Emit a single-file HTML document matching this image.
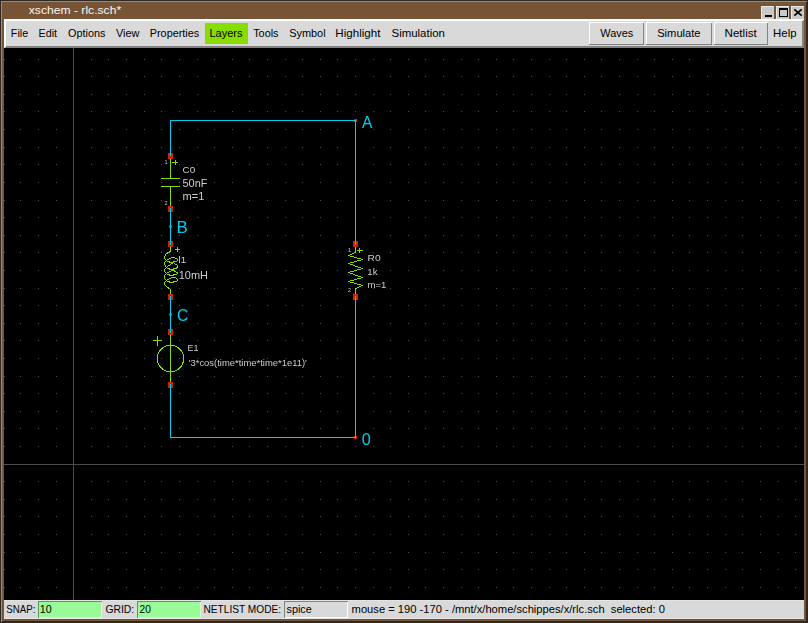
<!DOCTYPE html>
<html><head><meta charset="utf-8"><style>
html,body{margin:0;padding:0;background:#000;overflow:hidden}
svg{display:block}
text{font-family:"Liberation Sans",sans-serif;white-space:pre}
</style></head><body>
<svg width="808" height="623" viewBox="0 0 808 623" shape-rendering="crispEdges" xml:space="preserve">
<defs><filter id="gf"><feOffset dx="0" dy="0"/></filter></defs>
<rect x="0" y="0" width="808" height="623" fill="#775435"/>
<rect x="0" y="0" width="808" height="1" fill="#2c2823"/>
<rect x="0" y="0" width="1" height="623" fill="#2c2823"/>
<rect x="806" y="0" width="2" height="623" fill="#2c2823"/>
<rect x="0" y="621" width="808" height="2" fill="#2c2823"/>
<rect x="1" y="1" width="806" height="1" fill="#c4823c"/>
<rect x="1" y="1" width="1" height="621" fill="#c4823c"/>
<rect x="761" y="6" width="13" height="13" fill="#e8e8e8"/>
<rect x="762" y="7" width="12" height="12" fill="#c9c9c9"/>
<rect x="765" y="15" width="7" height="2" fill="#000"/>
<rect x="776" y="6" width="13" height="13" fill="#e8e8e8"/>
<rect x="777" y="7" width="12" height="12" fill="#c9c9c9"/>
<rect x="779.5" y="8.5" width="8" height="8" fill="none" stroke="#000" stroke-width="1"/>
<rect x="779" y="8" width="9" height="2" fill="#000"/>
<rect x="791" y="6" width="13" height="13" fill="#e8e8e8"/>
<rect x="792" y="7" width="12" height="12" fill="#c9c9c9"/>
<path d="M794.3 9.3 L801.7 15.7 M801.7 9.3 L794.3 15.7" stroke="#000" stroke-width="1.7" shape-rendering="auto"/>
<rect x="4" y="19" width="800" height="29" fill="#828282"/>
<rect x="4" y="19" width="800" height="2" fill="#ffffff"/>
<rect x="4" y="19" width="2" height="29" fill="#ffffff"/>
<path d="M802 21h1v-1h1v28h-2z" fill="#828282"/>
<rect x="6" y="46" width="798" height="2" fill="#828282"/>
<path d="M4 48h1v-1h1v1z" fill="#828282"/>
<rect x="6" y="21" width="796" height="25" fill="#d9d9d9"/>
<rect x="205" y="23" width="43" height="21" fill="#88dd00"/>
<rect x="589" y="22" width="55" height="23" fill="#828282"/>
<rect x="589" y="22" width="55" height="1" fill="#ffffff"/>
<rect x="589" y="22" width="1" height="22" fill="#ffffff"/>
<rect x="590" y="23" width="53" height="21" fill="#d9d9d9"/>
<rect x="646" y="22" width="66" height="23" fill="#828282"/>
<rect x="646" y="22" width="66" height="1" fill="#ffffff"/>
<rect x="646" y="22" width="1" height="22" fill="#ffffff"/>
<rect x="647" y="23" width="64" height="21" fill="#d9d9d9"/>
<rect x="714" y="22" width="54" height="23" fill="#828282"/>
<rect x="714" y="22" width="54" height="1" fill="#ffffff"/>
<rect x="714" y="22" width="1" height="22" fill="#ffffff"/>
<rect x="715" y="23" width="52" height="21" fill="#d9d9d9"/>
<rect x="4" y="48" width="800" height="552" fill="#000"/>
<rect x="4" y="600" width="800" height="19" fill="#d9d9d9"/>
<rect x="4" y="600" width="800" height="1" fill="#e4e4e4"/>
<rect x="4" y="618" width="800" height="1" fill="#e4e4e4"/>
<rect x="38" y="601" width="64" height="17" fill="#d5ffd5"/>
<rect x="38" y="601" width="64" height="1" fill="#5b975b"/>
<rect x="38" y="601" width="1" height="17" fill="#5b975b"/>
<rect x="39" y="602" width="62" height="15" fill="#98fb98"/>
<rect x="137" y="601" width="64" height="17" fill="#d5ffd5"/>
<rect x="137" y="601" width="64" height="1" fill="#5b975b"/>
<rect x="137" y="601" width="1" height="17" fill="#5b975b"/>
<rect x="138" y="602" width="62" height="15" fill="#98fb98"/>
<rect x="284" y="601" width="64" height="17" fill="#ffffff"/>
<rect x="284" y="601" width="64" height="1" fill="#828282"/>
<rect x="284" y="601" width="1" height="17" fill="#828282"/>
<rect x="285" y="602" width="62" height="15" fill="#d9d9d9"/>
<path d="M4 59h1v1h-1zM4 76h1v1h-1zM4 94h1v1h-1zM4 111h1v1h-1zM4 129h1v1h-1zM4 147h1v1h-1zM4 164h1v1h-1zM4 182h1v1h-1zM4 200h1v1h-1zM4 217h1v1h-1zM4 235h1v1h-1zM4 252h1v1h-1zM4 270h1v1h-1zM4 288h1v1h-1zM4 305h1v1h-1zM4 323h1v1h-1zM4 340h1v1h-1zM4 358h1v1h-1zM4 376h1v1h-1zM4 393h1v1h-1zM4 411h1v1h-1zM4 428h1v1h-1zM4 446h1v1h-1zM4 481h1v1h-1zM4 499h1v1h-1zM4 516h1v1h-1zM4 534h1v1h-1zM4 552h1v1h-1zM4 569h1v1h-1zM4 587h1v1h-1zM20 59h1v1h-1zM20 76h1v1h-1zM20 94h1v1h-1zM20 111h1v1h-1zM20 129h1v1h-1zM20 147h1v1h-1zM20 164h1v1h-1zM20 182h1v1h-1zM20 200h1v1h-1zM20 217h1v1h-1zM20 235h1v1h-1zM20 252h1v1h-1zM20 270h1v1h-1zM20 288h1v1h-1zM20 305h1v1h-1zM20 323h1v1h-1zM20 340h1v1h-1zM20 358h1v1h-1zM20 376h1v1h-1zM20 393h1v1h-1zM20 411h1v1h-1zM20 428h1v1h-1zM20 446h1v1h-1zM20 481h1v1h-1zM20 499h1v1h-1zM20 516h1v1h-1zM20 534h1v1h-1zM20 552h1v1h-1zM20 569h1v1h-1zM20 587h1v1h-1zM38 59h1v1h-1zM38 76h1v1h-1zM38 94h1v1h-1zM38 111h1v1h-1zM38 129h1v1h-1zM38 147h1v1h-1zM38 164h1v1h-1zM38 182h1v1h-1zM38 200h1v1h-1zM38 217h1v1h-1zM38 235h1v1h-1zM38 252h1v1h-1zM38 270h1v1h-1zM38 288h1v1h-1zM38 305h1v1h-1zM38 323h1v1h-1zM38 340h1v1h-1zM38 358h1v1h-1zM38 376h1v1h-1zM38 393h1v1h-1zM38 411h1v1h-1zM38 428h1v1h-1zM38 446h1v1h-1zM38 481h1v1h-1zM38 499h1v1h-1zM38 516h1v1h-1zM38 534h1v1h-1zM38 552h1v1h-1zM38 569h1v1h-1zM38 587h1v1h-1zM56 59h1v1h-1zM56 76h1v1h-1zM56 94h1v1h-1zM56 111h1v1h-1zM56 129h1v1h-1zM56 147h1v1h-1zM56 164h1v1h-1zM56 182h1v1h-1zM56 200h1v1h-1zM56 217h1v1h-1zM56 235h1v1h-1zM56 252h1v1h-1zM56 270h1v1h-1zM56 288h1v1h-1zM56 305h1v1h-1zM56 323h1v1h-1zM56 340h1v1h-1zM56 358h1v1h-1zM56 376h1v1h-1zM56 393h1v1h-1zM56 411h1v1h-1zM56 428h1v1h-1zM56 446h1v1h-1zM56 481h1v1h-1zM56 499h1v1h-1zM56 516h1v1h-1zM56 534h1v1h-1zM56 552h1v1h-1zM56 569h1v1h-1zM56 587h1v1h-1zM91 59h1v1h-1zM91 76h1v1h-1zM91 94h1v1h-1zM91 111h1v1h-1zM91 129h1v1h-1zM91 147h1v1h-1zM91 164h1v1h-1zM91 182h1v1h-1zM91 200h1v1h-1zM91 217h1v1h-1zM91 235h1v1h-1zM91 252h1v1h-1zM91 270h1v1h-1zM91 288h1v1h-1zM91 305h1v1h-1zM91 323h1v1h-1zM91 340h1v1h-1zM91 358h1v1h-1zM91 376h1v1h-1zM91 393h1v1h-1zM91 411h1v1h-1zM91 428h1v1h-1zM91 446h1v1h-1zM91 481h1v1h-1zM91 499h1v1h-1zM91 516h1v1h-1zM91 534h1v1h-1zM91 552h1v1h-1zM91 569h1v1h-1zM91 587h1v1h-1zM108 59h1v1h-1zM108 76h1v1h-1zM108 94h1v1h-1zM108 111h1v1h-1zM108 129h1v1h-1zM108 147h1v1h-1zM108 164h1v1h-1zM108 182h1v1h-1zM108 200h1v1h-1zM108 217h1v1h-1zM108 235h1v1h-1zM108 252h1v1h-1zM108 270h1v1h-1zM108 288h1v1h-1zM108 305h1v1h-1zM108 323h1v1h-1zM108 340h1v1h-1zM108 358h1v1h-1zM108 376h1v1h-1zM108 393h1v1h-1zM108 411h1v1h-1zM108 428h1v1h-1zM108 446h1v1h-1zM108 481h1v1h-1zM108 499h1v1h-1zM108 516h1v1h-1zM108 534h1v1h-1zM108 552h1v1h-1zM108 569h1v1h-1zM108 587h1v1h-1zM126 59h1v1h-1zM126 76h1v1h-1zM126 94h1v1h-1zM126 111h1v1h-1zM126 129h1v1h-1zM126 147h1v1h-1zM126 164h1v1h-1zM126 182h1v1h-1zM126 200h1v1h-1zM126 217h1v1h-1zM126 235h1v1h-1zM126 252h1v1h-1zM126 270h1v1h-1zM126 288h1v1h-1zM126 305h1v1h-1zM126 323h1v1h-1zM126 340h1v1h-1zM126 358h1v1h-1zM126 376h1v1h-1zM126 393h1v1h-1zM126 411h1v1h-1zM126 428h1v1h-1zM126 446h1v1h-1zM126 481h1v1h-1zM126 499h1v1h-1zM126 516h1v1h-1zM126 534h1v1h-1zM126 552h1v1h-1zM126 569h1v1h-1zM126 587h1v1h-1zM144 59h1v1h-1zM144 76h1v1h-1zM144 94h1v1h-1zM144 111h1v1h-1zM144 129h1v1h-1zM144 147h1v1h-1zM144 164h1v1h-1zM144 182h1v1h-1zM144 200h1v1h-1zM144 217h1v1h-1zM144 235h1v1h-1zM144 252h1v1h-1zM144 270h1v1h-1zM144 288h1v1h-1zM144 305h1v1h-1zM144 323h1v1h-1zM144 340h1v1h-1zM144 358h1v1h-1zM144 376h1v1h-1zM144 393h1v1h-1zM144 411h1v1h-1zM144 428h1v1h-1zM144 446h1v1h-1zM144 481h1v1h-1zM144 499h1v1h-1zM144 516h1v1h-1zM144 534h1v1h-1zM144 552h1v1h-1zM144 569h1v1h-1zM144 587h1v1h-1zM161 59h1v1h-1zM161 76h1v1h-1zM161 94h1v1h-1zM161 111h1v1h-1zM161 129h1v1h-1zM161 147h1v1h-1zM161 164h1v1h-1zM161 182h1v1h-1zM161 200h1v1h-1zM161 217h1v1h-1zM161 235h1v1h-1zM161 252h1v1h-1zM161 270h1v1h-1zM161 288h1v1h-1zM161 305h1v1h-1zM161 323h1v1h-1zM161 340h1v1h-1zM161 358h1v1h-1zM161 376h1v1h-1zM161 393h1v1h-1zM161 411h1v1h-1zM161 428h1v1h-1zM161 446h1v1h-1zM161 481h1v1h-1zM161 499h1v1h-1zM161 516h1v1h-1zM161 534h1v1h-1zM161 552h1v1h-1zM161 569h1v1h-1zM161 587h1v1h-1zM179 59h1v1h-1zM179 76h1v1h-1zM179 94h1v1h-1zM179 111h1v1h-1zM179 129h1v1h-1zM179 147h1v1h-1zM179 164h1v1h-1zM179 182h1v1h-1zM179 200h1v1h-1zM179 217h1v1h-1zM179 235h1v1h-1zM179 252h1v1h-1zM179 270h1v1h-1zM179 288h1v1h-1zM179 305h1v1h-1zM179 323h1v1h-1zM179 340h1v1h-1zM179 358h1v1h-1zM179 376h1v1h-1zM179 393h1v1h-1zM179 411h1v1h-1zM179 428h1v1h-1zM179 446h1v1h-1zM179 481h1v1h-1zM179 499h1v1h-1zM179 516h1v1h-1zM179 534h1v1h-1zM179 552h1v1h-1zM179 569h1v1h-1zM179 587h1v1h-1zM197 59h1v1h-1zM197 76h1v1h-1zM197 94h1v1h-1zM197 111h1v1h-1zM197 129h1v1h-1zM197 147h1v1h-1zM197 164h1v1h-1zM197 182h1v1h-1zM197 200h1v1h-1zM197 217h1v1h-1zM197 235h1v1h-1zM197 252h1v1h-1zM197 270h1v1h-1zM197 288h1v1h-1zM197 305h1v1h-1zM197 323h1v1h-1zM197 340h1v1h-1zM197 358h1v1h-1zM197 376h1v1h-1zM197 393h1v1h-1zM197 411h1v1h-1zM197 428h1v1h-1zM197 446h1v1h-1zM197 481h1v1h-1zM197 499h1v1h-1zM197 516h1v1h-1zM197 534h1v1h-1zM197 552h1v1h-1zM197 569h1v1h-1zM197 587h1v1h-1zM214 59h1v1h-1zM214 76h1v1h-1zM214 94h1v1h-1zM214 111h1v1h-1zM214 129h1v1h-1zM214 147h1v1h-1zM214 164h1v1h-1zM214 182h1v1h-1zM214 200h1v1h-1zM214 217h1v1h-1zM214 235h1v1h-1zM214 252h1v1h-1zM214 270h1v1h-1zM214 288h1v1h-1zM214 305h1v1h-1zM214 323h1v1h-1zM214 340h1v1h-1zM214 358h1v1h-1zM214 376h1v1h-1zM214 393h1v1h-1zM214 411h1v1h-1zM214 428h1v1h-1zM214 446h1v1h-1zM214 481h1v1h-1zM214 499h1v1h-1zM214 516h1v1h-1zM214 534h1v1h-1zM214 552h1v1h-1zM214 569h1v1h-1zM214 587h1v1h-1zM232 59h1v1h-1zM232 76h1v1h-1zM232 94h1v1h-1zM232 111h1v1h-1zM232 129h1v1h-1zM232 147h1v1h-1zM232 164h1v1h-1zM232 182h1v1h-1zM232 200h1v1h-1zM232 217h1v1h-1zM232 235h1v1h-1zM232 252h1v1h-1zM232 270h1v1h-1zM232 288h1v1h-1zM232 305h1v1h-1zM232 323h1v1h-1zM232 340h1v1h-1zM232 358h1v1h-1zM232 376h1v1h-1zM232 393h1v1h-1zM232 411h1v1h-1zM232 428h1v1h-1zM232 446h1v1h-1zM232 481h1v1h-1zM232 499h1v1h-1zM232 516h1v1h-1zM232 534h1v1h-1zM232 552h1v1h-1zM232 569h1v1h-1zM232 587h1v1h-1zM249 59h1v1h-1zM249 76h1v1h-1zM249 94h1v1h-1zM249 111h1v1h-1zM249 129h1v1h-1zM249 147h1v1h-1zM249 164h1v1h-1zM249 182h1v1h-1zM249 200h1v1h-1zM249 217h1v1h-1zM249 235h1v1h-1zM249 252h1v1h-1zM249 270h1v1h-1zM249 288h1v1h-1zM249 305h1v1h-1zM249 323h1v1h-1zM249 340h1v1h-1zM249 358h1v1h-1zM249 376h1v1h-1zM249 393h1v1h-1zM249 411h1v1h-1zM249 428h1v1h-1zM249 446h1v1h-1zM249 481h1v1h-1zM249 499h1v1h-1zM249 516h1v1h-1zM249 534h1v1h-1zM249 552h1v1h-1zM249 569h1v1h-1zM249 587h1v1h-1zM267 59h1v1h-1zM267 76h1v1h-1zM267 94h1v1h-1zM267 111h1v1h-1zM267 129h1v1h-1zM267 147h1v1h-1zM267 164h1v1h-1zM267 182h1v1h-1zM267 200h1v1h-1zM267 217h1v1h-1zM267 235h1v1h-1zM267 252h1v1h-1zM267 270h1v1h-1zM267 288h1v1h-1zM267 305h1v1h-1zM267 323h1v1h-1zM267 340h1v1h-1zM267 358h1v1h-1zM267 376h1v1h-1zM267 393h1v1h-1zM267 411h1v1h-1zM267 428h1v1h-1zM267 446h1v1h-1zM267 481h1v1h-1zM267 499h1v1h-1zM267 516h1v1h-1zM267 534h1v1h-1zM267 552h1v1h-1zM267 569h1v1h-1zM267 587h1v1h-1zM285 59h1v1h-1zM285 76h1v1h-1zM285 94h1v1h-1zM285 111h1v1h-1zM285 129h1v1h-1zM285 147h1v1h-1zM285 164h1v1h-1zM285 182h1v1h-1zM285 200h1v1h-1zM285 217h1v1h-1zM285 235h1v1h-1zM285 252h1v1h-1zM285 270h1v1h-1zM285 288h1v1h-1zM285 305h1v1h-1zM285 323h1v1h-1zM285 340h1v1h-1zM285 358h1v1h-1zM285 376h1v1h-1zM285 393h1v1h-1zM285 411h1v1h-1zM285 428h1v1h-1zM285 446h1v1h-1zM285 481h1v1h-1zM285 499h1v1h-1zM285 516h1v1h-1zM285 534h1v1h-1zM285 552h1v1h-1zM285 569h1v1h-1zM285 587h1v1h-1zM302 59h1v1h-1zM302 76h1v1h-1zM302 94h1v1h-1zM302 111h1v1h-1zM302 129h1v1h-1zM302 147h1v1h-1zM302 164h1v1h-1zM302 182h1v1h-1zM302 200h1v1h-1zM302 217h1v1h-1zM302 235h1v1h-1zM302 252h1v1h-1zM302 270h1v1h-1zM302 288h1v1h-1zM302 305h1v1h-1zM302 323h1v1h-1zM302 340h1v1h-1zM302 358h1v1h-1zM302 376h1v1h-1zM302 393h1v1h-1zM302 411h1v1h-1zM302 428h1v1h-1zM302 446h1v1h-1zM302 481h1v1h-1zM302 499h1v1h-1zM302 516h1v1h-1zM302 534h1v1h-1zM302 552h1v1h-1zM302 569h1v1h-1zM302 587h1v1h-1zM320 59h1v1h-1zM320 76h1v1h-1zM320 94h1v1h-1zM320 111h1v1h-1zM320 129h1v1h-1zM320 147h1v1h-1zM320 164h1v1h-1zM320 182h1v1h-1zM320 200h1v1h-1zM320 217h1v1h-1zM320 235h1v1h-1zM320 252h1v1h-1zM320 270h1v1h-1zM320 288h1v1h-1zM320 305h1v1h-1zM320 323h1v1h-1zM320 340h1v1h-1zM320 358h1v1h-1zM320 376h1v1h-1zM320 393h1v1h-1zM320 411h1v1h-1zM320 428h1v1h-1zM320 446h1v1h-1zM320 481h1v1h-1zM320 499h1v1h-1zM320 516h1v1h-1zM320 534h1v1h-1zM320 552h1v1h-1zM320 569h1v1h-1zM320 587h1v1h-1zM337 59h1v1h-1zM337 76h1v1h-1zM337 94h1v1h-1zM337 111h1v1h-1zM337 129h1v1h-1zM337 147h1v1h-1zM337 164h1v1h-1zM337 182h1v1h-1zM337 200h1v1h-1zM337 217h1v1h-1zM337 235h1v1h-1zM337 252h1v1h-1zM337 270h1v1h-1zM337 288h1v1h-1zM337 305h1v1h-1zM337 323h1v1h-1zM337 340h1v1h-1zM337 358h1v1h-1zM337 376h1v1h-1zM337 393h1v1h-1zM337 411h1v1h-1zM337 428h1v1h-1zM337 446h1v1h-1zM337 481h1v1h-1zM337 499h1v1h-1zM337 516h1v1h-1zM337 534h1v1h-1zM337 552h1v1h-1zM337 569h1v1h-1zM337 587h1v1h-1zM355 59h1v1h-1zM355 76h1v1h-1zM355 94h1v1h-1zM355 111h1v1h-1zM355 129h1v1h-1zM355 147h1v1h-1zM355 164h1v1h-1zM355 182h1v1h-1zM355 200h1v1h-1zM355 217h1v1h-1zM355 235h1v1h-1zM355 252h1v1h-1zM355 270h1v1h-1zM355 288h1v1h-1zM355 305h1v1h-1zM355 323h1v1h-1zM355 340h1v1h-1zM355 358h1v1h-1zM355 376h1v1h-1zM355 393h1v1h-1zM355 411h1v1h-1zM355 428h1v1h-1zM355 446h1v1h-1zM355 481h1v1h-1zM355 499h1v1h-1zM355 516h1v1h-1zM355 534h1v1h-1zM355 552h1v1h-1zM355 569h1v1h-1zM355 587h1v1h-1zM373 59h1v1h-1zM373 76h1v1h-1zM373 94h1v1h-1zM373 111h1v1h-1zM373 129h1v1h-1zM373 147h1v1h-1zM373 164h1v1h-1zM373 182h1v1h-1zM373 200h1v1h-1zM373 217h1v1h-1zM373 235h1v1h-1zM373 252h1v1h-1zM373 270h1v1h-1zM373 288h1v1h-1zM373 305h1v1h-1zM373 323h1v1h-1zM373 340h1v1h-1zM373 358h1v1h-1zM373 376h1v1h-1zM373 393h1v1h-1zM373 411h1v1h-1zM373 428h1v1h-1zM373 446h1v1h-1zM373 481h1v1h-1zM373 499h1v1h-1zM373 516h1v1h-1zM373 534h1v1h-1zM373 552h1v1h-1zM373 569h1v1h-1zM373 587h1v1h-1zM390 59h1v1h-1zM390 76h1v1h-1zM390 94h1v1h-1zM390 111h1v1h-1zM390 129h1v1h-1zM390 147h1v1h-1zM390 164h1v1h-1zM390 182h1v1h-1zM390 200h1v1h-1zM390 217h1v1h-1zM390 235h1v1h-1zM390 252h1v1h-1zM390 270h1v1h-1zM390 288h1v1h-1zM390 305h1v1h-1zM390 323h1v1h-1zM390 340h1v1h-1zM390 358h1v1h-1zM390 376h1v1h-1zM390 393h1v1h-1zM390 411h1v1h-1zM390 428h1v1h-1zM390 446h1v1h-1zM390 481h1v1h-1zM390 499h1v1h-1zM390 516h1v1h-1zM390 534h1v1h-1zM390 552h1v1h-1zM390 569h1v1h-1zM390 587h1v1h-1zM408 59h1v1h-1zM408 76h1v1h-1zM408 94h1v1h-1zM408 111h1v1h-1zM408 129h1v1h-1zM408 147h1v1h-1zM408 164h1v1h-1zM408 182h1v1h-1zM408 200h1v1h-1zM408 217h1v1h-1zM408 235h1v1h-1zM408 252h1v1h-1zM408 270h1v1h-1zM408 288h1v1h-1zM408 305h1v1h-1zM408 323h1v1h-1zM408 340h1v1h-1zM408 358h1v1h-1zM408 376h1v1h-1zM408 393h1v1h-1zM408 411h1v1h-1zM408 428h1v1h-1zM408 446h1v1h-1zM408 481h1v1h-1zM408 499h1v1h-1zM408 516h1v1h-1zM408 534h1v1h-1zM408 552h1v1h-1zM408 569h1v1h-1zM408 587h1v1h-1zM425 59h1v1h-1zM425 76h1v1h-1zM425 94h1v1h-1zM425 111h1v1h-1zM425 129h1v1h-1zM425 147h1v1h-1zM425 164h1v1h-1zM425 182h1v1h-1zM425 200h1v1h-1zM425 217h1v1h-1zM425 235h1v1h-1zM425 252h1v1h-1zM425 270h1v1h-1zM425 288h1v1h-1zM425 305h1v1h-1zM425 323h1v1h-1zM425 340h1v1h-1zM425 358h1v1h-1zM425 376h1v1h-1zM425 393h1v1h-1zM425 411h1v1h-1zM425 428h1v1h-1zM425 446h1v1h-1zM425 481h1v1h-1zM425 499h1v1h-1zM425 516h1v1h-1zM425 534h1v1h-1zM425 552h1v1h-1zM425 569h1v1h-1zM425 587h1v1h-1zM443 59h1v1h-1zM443 76h1v1h-1zM443 94h1v1h-1zM443 111h1v1h-1zM443 129h1v1h-1zM443 147h1v1h-1zM443 164h1v1h-1zM443 182h1v1h-1zM443 200h1v1h-1zM443 217h1v1h-1zM443 235h1v1h-1zM443 252h1v1h-1zM443 270h1v1h-1zM443 288h1v1h-1zM443 305h1v1h-1zM443 323h1v1h-1zM443 340h1v1h-1zM443 358h1v1h-1zM443 376h1v1h-1zM443 393h1v1h-1zM443 411h1v1h-1zM443 428h1v1h-1zM443 446h1v1h-1zM443 481h1v1h-1zM443 499h1v1h-1zM443 516h1v1h-1zM443 534h1v1h-1zM443 552h1v1h-1zM443 569h1v1h-1zM443 587h1v1h-1zM461 59h1v1h-1zM461 76h1v1h-1zM461 94h1v1h-1zM461 111h1v1h-1zM461 129h1v1h-1zM461 147h1v1h-1zM461 164h1v1h-1zM461 182h1v1h-1zM461 200h1v1h-1zM461 217h1v1h-1zM461 235h1v1h-1zM461 252h1v1h-1zM461 270h1v1h-1zM461 288h1v1h-1zM461 305h1v1h-1zM461 323h1v1h-1zM461 340h1v1h-1zM461 358h1v1h-1zM461 376h1v1h-1zM461 393h1v1h-1zM461 411h1v1h-1zM461 428h1v1h-1zM461 446h1v1h-1zM461 481h1v1h-1zM461 499h1v1h-1zM461 516h1v1h-1zM461 534h1v1h-1zM461 552h1v1h-1zM461 569h1v1h-1zM461 587h1v1h-1zM478 59h1v1h-1zM478 76h1v1h-1zM478 94h1v1h-1zM478 111h1v1h-1zM478 129h1v1h-1zM478 147h1v1h-1zM478 164h1v1h-1zM478 182h1v1h-1zM478 200h1v1h-1zM478 217h1v1h-1zM478 235h1v1h-1zM478 252h1v1h-1zM478 270h1v1h-1zM478 288h1v1h-1zM478 305h1v1h-1zM478 323h1v1h-1zM478 340h1v1h-1zM478 358h1v1h-1zM478 376h1v1h-1zM478 393h1v1h-1zM478 411h1v1h-1zM478 428h1v1h-1zM478 446h1v1h-1zM478 481h1v1h-1zM478 499h1v1h-1zM478 516h1v1h-1zM478 534h1v1h-1zM478 552h1v1h-1zM478 569h1v1h-1zM478 587h1v1h-1zM496 59h1v1h-1zM496 76h1v1h-1zM496 94h1v1h-1zM496 111h1v1h-1zM496 129h1v1h-1zM496 147h1v1h-1zM496 164h1v1h-1zM496 182h1v1h-1zM496 200h1v1h-1zM496 217h1v1h-1zM496 235h1v1h-1zM496 252h1v1h-1zM496 270h1v1h-1zM496 288h1v1h-1zM496 305h1v1h-1zM496 323h1v1h-1zM496 340h1v1h-1zM496 358h1v1h-1zM496 376h1v1h-1zM496 393h1v1h-1zM496 411h1v1h-1zM496 428h1v1h-1zM496 446h1v1h-1zM496 481h1v1h-1zM496 499h1v1h-1zM496 516h1v1h-1zM496 534h1v1h-1zM496 552h1v1h-1zM496 569h1v1h-1zM496 587h1v1h-1zM513 59h1v1h-1zM513 76h1v1h-1zM513 94h1v1h-1zM513 111h1v1h-1zM513 129h1v1h-1zM513 147h1v1h-1zM513 164h1v1h-1zM513 182h1v1h-1zM513 200h1v1h-1zM513 217h1v1h-1zM513 235h1v1h-1zM513 252h1v1h-1zM513 270h1v1h-1zM513 288h1v1h-1zM513 305h1v1h-1zM513 323h1v1h-1zM513 340h1v1h-1zM513 358h1v1h-1zM513 376h1v1h-1zM513 393h1v1h-1zM513 411h1v1h-1zM513 428h1v1h-1zM513 446h1v1h-1zM513 481h1v1h-1zM513 499h1v1h-1zM513 516h1v1h-1zM513 534h1v1h-1zM513 552h1v1h-1zM513 569h1v1h-1zM513 587h1v1h-1zM531 59h1v1h-1zM531 76h1v1h-1zM531 94h1v1h-1zM531 111h1v1h-1zM531 129h1v1h-1zM531 147h1v1h-1zM531 164h1v1h-1zM531 182h1v1h-1zM531 200h1v1h-1zM531 217h1v1h-1zM531 235h1v1h-1zM531 252h1v1h-1zM531 270h1v1h-1zM531 288h1v1h-1zM531 305h1v1h-1zM531 323h1v1h-1zM531 340h1v1h-1zM531 358h1v1h-1zM531 376h1v1h-1zM531 393h1v1h-1zM531 411h1v1h-1zM531 428h1v1h-1zM531 446h1v1h-1zM531 481h1v1h-1zM531 499h1v1h-1zM531 516h1v1h-1zM531 534h1v1h-1zM531 552h1v1h-1zM531 569h1v1h-1zM531 587h1v1h-1zM549 59h1v1h-1zM549 76h1v1h-1zM549 94h1v1h-1zM549 111h1v1h-1zM549 129h1v1h-1zM549 147h1v1h-1zM549 164h1v1h-1zM549 182h1v1h-1zM549 200h1v1h-1zM549 217h1v1h-1zM549 235h1v1h-1zM549 252h1v1h-1zM549 270h1v1h-1zM549 288h1v1h-1zM549 305h1v1h-1zM549 323h1v1h-1zM549 340h1v1h-1zM549 358h1v1h-1zM549 376h1v1h-1zM549 393h1v1h-1zM549 411h1v1h-1zM549 428h1v1h-1zM549 446h1v1h-1zM549 481h1v1h-1zM549 499h1v1h-1zM549 516h1v1h-1zM549 534h1v1h-1zM549 552h1v1h-1zM549 569h1v1h-1zM549 587h1v1h-1zM566 59h1v1h-1zM566 76h1v1h-1zM566 94h1v1h-1zM566 111h1v1h-1zM566 129h1v1h-1zM566 147h1v1h-1zM566 164h1v1h-1zM566 182h1v1h-1zM566 200h1v1h-1zM566 217h1v1h-1zM566 235h1v1h-1zM566 252h1v1h-1zM566 270h1v1h-1zM566 288h1v1h-1zM566 305h1v1h-1zM566 323h1v1h-1zM566 340h1v1h-1zM566 358h1v1h-1zM566 376h1v1h-1zM566 393h1v1h-1zM566 411h1v1h-1zM566 428h1v1h-1zM566 446h1v1h-1zM566 481h1v1h-1zM566 499h1v1h-1zM566 516h1v1h-1zM566 534h1v1h-1zM566 552h1v1h-1zM566 569h1v1h-1zM566 587h1v1h-1zM584 59h1v1h-1zM584 76h1v1h-1zM584 94h1v1h-1zM584 111h1v1h-1zM584 129h1v1h-1zM584 147h1v1h-1zM584 164h1v1h-1zM584 182h1v1h-1zM584 200h1v1h-1zM584 217h1v1h-1zM584 235h1v1h-1zM584 252h1v1h-1zM584 270h1v1h-1zM584 288h1v1h-1zM584 305h1v1h-1zM584 323h1v1h-1zM584 340h1v1h-1zM584 358h1v1h-1zM584 376h1v1h-1zM584 393h1v1h-1zM584 411h1v1h-1zM584 428h1v1h-1zM584 446h1v1h-1zM584 481h1v1h-1zM584 499h1v1h-1zM584 516h1v1h-1zM584 534h1v1h-1zM584 552h1v1h-1zM584 569h1v1h-1zM584 587h1v1h-1zM601 59h1v1h-1zM601 76h1v1h-1zM601 94h1v1h-1zM601 111h1v1h-1zM601 129h1v1h-1zM601 147h1v1h-1zM601 164h1v1h-1zM601 182h1v1h-1zM601 200h1v1h-1zM601 217h1v1h-1zM601 235h1v1h-1zM601 252h1v1h-1zM601 270h1v1h-1zM601 288h1v1h-1zM601 305h1v1h-1zM601 323h1v1h-1zM601 340h1v1h-1zM601 358h1v1h-1zM601 376h1v1h-1zM601 393h1v1h-1zM601 411h1v1h-1zM601 428h1v1h-1zM601 446h1v1h-1zM601 481h1v1h-1zM601 499h1v1h-1zM601 516h1v1h-1zM601 534h1v1h-1zM601 552h1v1h-1zM601 569h1v1h-1zM601 587h1v1h-1zM619 59h1v1h-1zM619 76h1v1h-1zM619 94h1v1h-1zM619 111h1v1h-1zM619 129h1v1h-1zM619 147h1v1h-1zM619 164h1v1h-1zM619 182h1v1h-1zM619 200h1v1h-1zM619 217h1v1h-1zM619 235h1v1h-1zM619 252h1v1h-1zM619 270h1v1h-1zM619 288h1v1h-1zM619 305h1v1h-1zM619 323h1v1h-1zM619 340h1v1h-1zM619 358h1v1h-1zM619 376h1v1h-1zM619 393h1v1h-1zM619 411h1v1h-1zM619 428h1v1h-1zM619 446h1v1h-1zM619 481h1v1h-1zM619 499h1v1h-1zM619 516h1v1h-1zM619 534h1v1h-1zM619 552h1v1h-1zM619 569h1v1h-1zM619 587h1v1h-1zM637 59h1v1h-1zM637 76h1v1h-1zM637 94h1v1h-1zM637 111h1v1h-1zM637 129h1v1h-1zM637 147h1v1h-1zM637 164h1v1h-1zM637 182h1v1h-1zM637 200h1v1h-1zM637 217h1v1h-1zM637 235h1v1h-1zM637 252h1v1h-1zM637 270h1v1h-1zM637 288h1v1h-1zM637 305h1v1h-1zM637 323h1v1h-1zM637 340h1v1h-1zM637 358h1v1h-1zM637 376h1v1h-1zM637 393h1v1h-1zM637 411h1v1h-1zM637 428h1v1h-1zM637 446h1v1h-1zM637 481h1v1h-1zM637 499h1v1h-1zM637 516h1v1h-1zM637 534h1v1h-1zM637 552h1v1h-1zM637 569h1v1h-1zM637 587h1v1h-1zM654 59h1v1h-1zM654 76h1v1h-1zM654 94h1v1h-1zM654 111h1v1h-1zM654 129h1v1h-1zM654 147h1v1h-1zM654 164h1v1h-1zM654 182h1v1h-1zM654 200h1v1h-1zM654 217h1v1h-1zM654 235h1v1h-1zM654 252h1v1h-1zM654 270h1v1h-1zM654 288h1v1h-1zM654 305h1v1h-1zM654 323h1v1h-1zM654 340h1v1h-1zM654 358h1v1h-1zM654 376h1v1h-1zM654 393h1v1h-1zM654 411h1v1h-1zM654 428h1v1h-1zM654 446h1v1h-1zM654 481h1v1h-1zM654 499h1v1h-1zM654 516h1v1h-1zM654 534h1v1h-1zM654 552h1v1h-1zM654 569h1v1h-1zM654 587h1v1h-1zM672 59h1v1h-1zM672 76h1v1h-1zM672 94h1v1h-1zM672 111h1v1h-1zM672 129h1v1h-1zM672 147h1v1h-1zM672 164h1v1h-1zM672 182h1v1h-1zM672 200h1v1h-1zM672 217h1v1h-1zM672 235h1v1h-1zM672 252h1v1h-1zM672 270h1v1h-1zM672 288h1v1h-1zM672 305h1v1h-1zM672 323h1v1h-1zM672 340h1v1h-1zM672 358h1v1h-1zM672 376h1v1h-1zM672 393h1v1h-1zM672 411h1v1h-1zM672 428h1v1h-1zM672 446h1v1h-1zM672 481h1v1h-1zM672 499h1v1h-1zM672 516h1v1h-1zM672 534h1v1h-1zM672 552h1v1h-1zM672 569h1v1h-1zM672 587h1v1h-1zM689 59h1v1h-1zM689 76h1v1h-1zM689 94h1v1h-1zM689 111h1v1h-1zM689 129h1v1h-1zM689 147h1v1h-1zM689 164h1v1h-1zM689 182h1v1h-1zM689 200h1v1h-1zM689 217h1v1h-1zM689 235h1v1h-1zM689 252h1v1h-1zM689 270h1v1h-1zM689 288h1v1h-1zM689 305h1v1h-1zM689 323h1v1h-1zM689 340h1v1h-1zM689 358h1v1h-1zM689 376h1v1h-1zM689 393h1v1h-1zM689 411h1v1h-1zM689 428h1v1h-1zM689 446h1v1h-1zM689 481h1v1h-1zM689 499h1v1h-1zM689 516h1v1h-1zM689 534h1v1h-1zM689 552h1v1h-1zM689 569h1v1h-1zM689 587h1v1h-1zM707 59h1v1h-1zM707 76h1v1h-1zM707 94h1v1h-1zM707 111h1v1h-1zM707 129h1v1h-1zM707 147h1v1h-1zM707 164h1v1h-1zM707 182h1v1h-1zM707 200h1v1h-1zM707 217h1v1h-1zM707 235h1v1h-1zM707 252h1v1h-1zM707 270h1v1h-1zM707 288h1v1h-1zM707 305h1v1h-1zM707 323h1v1h-1zM707 340h1v1h-1zM707 358h1v1h-1zM707 376h1v1h-1zM707 393h1v1h-1zM707 411h1v1h-1zM707 428h1v1h-1zM707 446h1v1h-1zM707 481h1v1h-1zM707 499h1v1h-1zM707 516h1v1h-1zM707 534h1v1h-1zM707 552h1v1h-1zM707 569h1v1h-1zM707 587h1v1h-1zM725 59h1v1h-1zM725 76h1v1h-1zM725 94h1v1h-1zM725 111h1v1h-1zM725 129h1v1h-1zM725 147h1v1h-1zM725 164h1v1h-1zM725 182h1v1h-1zM725 200h1v1h-1zM725 217h1v1h-1zM725 235h1v1h-1zM725 252h1v1h-1zM725 270h1v1h-1zM725 288h1v1h-1zM725 305h1v1h-1zM725 323h1v1h-1zM725 340h1v1h-1zM725 358h1v1h-1zM725 376h1v1h-1zM725 393h1v1h-1zM725 411h1v1h-1zM725 428h1v1h-1zM725 446h1v1h-1zM725 481h1v1h-1zM725 499h1v1h-1zM725 516h1v1h-1zM725 534h1v1h-1zM725 552h1v1h-1zM725 569h1v1h-1zM725 587h1v1h-1zM742 59h1v1h-1zM742 76h1v1h-1zM742 94h1v1h-1zM742 111h1v1h-1zM742 129h1v1h-1zM742 147h1v1h-1zM742 164h1v1h-1zM742 182h1v1h-1zM742 200h1v1h-1zM742 217h1v1h-1zM742 235h1v1h-1zM742 252h1v1h-1zM742 270h1v1h-1zM742 288h1v1h-1zM742 305h1v1h-1zM742 323h1v1h-1zM742 340h1v1h-1zM742 358h1v1h-1zM742 376h1v1h-1zM742 393h1v1h-1zM742 411h1v1h-1zM742 428h1v1h-1zM742 446h1v1h-1zM742 481h1v1h-1zM742 499h1v1h-1zM742 516h1v1h-1zM742 534h1v1h-1zM742 552h1v1h-1zM742 569h1v1h-1zM742 587h1v1h-1zM760 59h1v1h-1zM760 76h1v1h-1zM760 94h1v1h-1zM760 111h1v1h-1zM760 129h1v1h-1zM760 147h1v1h-1zM760 164h1v1h-1zM760 182h1v1h-1zM760 200h1v1h-1zM760 217h1v1h-1zM760 235h1v1h-1zM760 252h1v1h-1zM760 270h1v1h-1zM760 288h1v1h-1zM760 305h1v1h-1zM760 323h1v1h-1zM760 340h1v1h-1zM760 358h1v1h-1zM760 376h1v1h-1zM760 393h1v1h-1zM760 411h1v1h-1zM760 428h1v1h-1zM760 446h1v1h-1zM760 481h1v1h-1zM760 499h1v1h-1zM760 516h1v1h-1zM760 534h1v1h-1zM760 552h1v1h-1zM760 569h1v1h-1zM760 587h1v1h-1zM778 59h1v1h-1zM778 76h1v1h-1zM778 94h1v1h-1zM778 111h1v1h-1zM778 129h1v1h-1zM778 147h1v1h-1zM778 164h1v1h-1zM778 182h1v1h-1zM778 200h1v1h-1zM778 217h1v1h-1zM778 235h1v1h-1zM778 252h1v1h-1zM778 270h1v1h-1zM778 288h1v1h-1zM778 305h1v1h-1zM778 323h1v1h-1zM778 340h1v1h-1zM778 358h1v1h-1zM778 376h1v1h-1zM778 393h1v1h-1zM778 411h1v1h-1zM778 428h1v1h-1zM778 446h1v1h-1zM778 481h1v1h-1zM778 499h1v1h-1zM778 516h1v1h-1zM778 534h1v1h-1zM778 552h1v1h-1zM778 569h1v1h-1zM778 587h1v1h-1zM795 59h1v1h-1zM795 76h1v1h-1zM795 94h1v1h-1zM795 111h1v1h-1zM795 129h1v1h-1zM795 147h1v1h-1zM795 164h1v1h-1zM795 182h1v1h-1zM795 200h1v1h-1zM795 217h1v1h-1zM795 235h1v1h-1zM795 252h1v1h-1zM795 270h1v1h-1zM795 288h1v1h-1zM795 305h1v1h-1zM795 323h1v1h-1zM795 340h1v1h-1zM795 358h1v1h-1zM795 376h1v1h-1zM795 393h1v1h-1zM795 411h1v1h-1zM795 428h1v1h-1zM795 446h1v1h-1zM795 481h1v1h-1zM795 499h1v1h-1zM795 516h1v1h-1zM795 534h1v1h-1zM795 552h1v1h-1zM795 569h1v1h-1zM795 587h1v1h-1z" fill="#4c4c4c"/>
<rect x="73" y="48" width="1" height="552" fill="#4c4c4c"/>
<rect x="4" y="464" width="800" height="1" fill="#4c4c4c"/>
<path d="M170 155h1v1h-1zM170 156h1v1h-1zM170 157h1v1h-1zM170 158h1v1h-1zM170 159h1v1h-1zM170 160h1v1h-1zM175 160h1v1h-1zM170 161h1v1h-1zM175 161h1v1h-1zM170 162h1v1h-1zM172 162h6v1h-6zM170 163h1v1h-1zM175 163h1v1h-1zM170 164h1v1h-1zM175 164h1v1h-1zM170 165h1v1h-1zM170 166h1v1h-1zM170 167h1v1h-1zM170 168h1v1h-1zM170 169h1v1h-1zM170 170h1v1h-1zM170 171h1v1h-1zM170 172h1v1h-1zM170 173h1v1h-1zM170 174h1v1h-1zM170 175h1v1h-1zM170 176h1v1h-1zM170 177h1v1h-1zM161 178h19v1h-19zM161 186h19v1h-19zM170 187h1v1h-1zM170 188h1v1h-1zM170 189h1v1h-1zM170 190h1v1h-1zM170 191h1v1h-1zM170 192h1v1h-1zM170 193h1v1h-1zM170 194h1v1h-1zM170 195h1v1h-1zM170 196h1v1h-1zM170 197h1v1h-1zM170 198h1v1h-1zM170 199h1v1h-1zM170 200h1v1h-1zM170 201h1v1h-1zM170 202h1v1h-1zM170 203h1v1h-1zM170 204h1v1h-1zM170 205h1v1h-1zM170 206h1v1h-1zM170 207h1v1h-1zM170 208h1v1h-1zM355 244h1v1h-1zM355 245h1v1h-1zM355 246h1v1h-1zM170 247h1v1h-1zM177 247h1v1h-1zM355 247h1v1h-1zM170 248h1v1h-1zM177 248h1v1h-1zM355 248h1v1h-1zM359 248h1v1h-1zM170 249h1v1h-1zM175 249h5v1h-5zM355 249h1v1h-1zM359 249h1v1h-1zM170 250h1v1h-1zM177 250h1v1h-1zM355 250h1v1h-1zM357 250h6v1h-6zM169 251h2v1h-2zM177 251h1v1h-1zM355 251h1v1h-1zM359 251h1v1h-1zM167 252h3v1h-3zM354 252h2v1h-2zM359 252h1v1h-1zM166 253h2v1h-2zM352 253h2v1h-2zM165 254h1v1h-1zM350 254h2v1h-2zM165 255h1v1h-1zM348 255h2v1h-2zM164 256h1v1h-1zM350 256h4v1h-4zM164 257h1v1h-1zM171 257h4v1h-4zM354 257h3v1h-3zM164 258h1v1h-1zM169 258h2v1h-2zM175 258h2v1h-2zM357 258h4v1h-4zM165 259h1v1h-1zM167 259h2v1h-2zM177 259h1v1h-1zM361 259h2v1h-2zM166 260h1v1h-1zM177 260h1v1h-1zM357 260h4v1h-4zM165 261h1v1h-1zM167 261h3v1h-3zM173 261h4v1h-4zM354 261h3v1h-3zM164 262h1v1h-1zM169 262h5v1h-5zM350 262h4v1h-4zM164 263h1v1h-1zM171 263h2v1h-2zM174 263h1v1h-1zM348 263h2v1h-2zM164 264h1v1h-1zM170 264h1v1h-1zM175 264h2v1h-2zM350 264h3v1h-3zM165 265h1v1h-1zM168 265h2v1h-2zM177 265h1v1h-1zM353 265h2v1h-2zM165 266h1v1h-1zM167 266h1v1h-1zM177 266h1v1h-1zM355 266h3v1h-3zM166 267h1v1h-1zM176 267h2v1h-2zM358 267h3v1h-3zM165 268h1v1h-1zM167 268h3v1h-3zM173 268h4v1h-4zM361 268h2v1h-2zM164 269h1v1h-1zM169 269h5v1h-5zM357 269h4v1h-4zM164 270h1v1h-1zM171 270h4v1h-4zM354 270h3v1h-3zM164 271h1v1h-1zM169 271h2v1h-2zM174 271h2v1h-2zM350 271h4v1h-4zM165 272h1v1h-1zM167 272h2v1h-2zM176 272h2v1h-2zM348 272h2v1h-2zM166 273h1v1h-1zM177 273h1v1h-1zM350 273h3v1h-3zM165 274h1v1h-1zM167 274h3v1h-3zM173 274h4v1h-4zM353 274h2v1h-2zM164 275h1v1h-1zM169 275h5v1h-5zM355 275h3v1h-3zM164 276h1v1h-1zM358 276h3v1h-3zM164 277h1v1h-1zM171 277h5v1h-5zM361 277h2v1h-2zM164 278h1v1h-1zM169 278h2v1h-2zM176 278h1v1h-1zM357 278h4v1h-4zM165 279h1v1h-1zM167 279h2v1h-2zM177 279h1v1h-1zM354 279h3v1h-3zM166 280h1v1h-1zM177 280h1v1h-1zM350 280h4v1h-4zM165 281h1v1h-1zM167 281h3v1h-3zM173 281h4v1h-4zM348 281h2v1h-2zM164 282h1v1h-1zM169 282h5v1h-5zM350 282h4v1h-4zM164 283h1v1h-1zM354 283h3v1h-3zM164 284h1v1h-1zM357 284h4v1h-4zM165 285h1v1h-1zM361 285h2v1h-2zM166 286h1v1h-1zM359 286h2v1h-2zM167 287h2v1h-2zM357 287h2v1h-2zM168 288h2v1h-2zM355 288h2v1h-2zM170 289h1v1h-1zM355 289h1v1h-1zM170 290h1v1h-1zM355 290h1v1h-1zM170 291h1v1h-1zM355 291h1v1h-1zM170 292h1v1h-1zM355 292h1v1h-1zM170 293h1v1h-1zM355 293h1v1h-1zM355 294h1v1h-1zM355 295h1v1h-1zM355 296h1v1h-1zM170 332h1v1h-1zM170 333h1v1h-1zM170 334h1v1h-1zM170 335h1v1h-1zM157 336h1v1h-1zM170 336h1v1h-1zM157 337h1v1h-1zM170 337h1v1h-1zM157 338h1v1h-1zM170 338h1v1h-1zM157 339h1v1h-1zM170 339h1v1h-1zM153 340h9v1h-9zM170 340h1v1h-1zM157 341h1v1h-1zM170 341h1v1h-1zM157 342h1v1h-1zM170 342h1v1h-1zM157 343h1v1h-1zM170 343h1v1h-1zM157 344h1v1h-1zM170 344h1v1h-1zM157 345h1v1h-1zM170 345h1v1h-1zM170 346h1v1h-1zM170 347h1v1h-1zM170 348h1v1h-1zM170 349h1v1h-1zM170 350h1v1h-1zM170 351h1v1h-1zM170 352h1v1h-1zM170 353h1v1h-1zM170 354h1v1h-1zM170 355h1v1h-1zM170 356h1v1h-1zM170 357h1v1h-1zM170 358h1v1h-1zM170 359h1v1h-1zM170 360h1v1h-1zM170 361h1v1h-1zM170 362h1v1h-1zM170 363h1v1h-1zM170 364h1v1h-1zM170 365h1v1h-1zM170 366h1v1h-1zM170 367h1v1h-1zM170 368h1v1h-1zM170 369h1v1h-1zM170 370h1v1h-1zM170 371h1v1h-1zM170 372h1v1h-1zM170 373h1v1h-1zM170 374h1v1h-1zM170 375h1v1h-1zM170 376h1v1h-1zM170 377h1v1h-1zM170 378h1v1h-1zM170 379h1v1h-1zM170 380h1v1h-1zM170 381h1v1h-1zM170 382h1v1h-1zM170 383h1v1h-1zM170 384h1v1h-1z" fill="#88dd00"/>
<circle cx="170.5" cy="358.5" r="13.2" fill="none" stroke="#88dd00" stroke-width="1"/>
<path d="M354 119h3v1h-3zM354 120h3v1h-3zM354 121h3v1h-3zM168 153h5v1h-5zM168 154h5v1h-5zM168 155h5v1h-5zM168 156h5v1h-5zM168 157h5v1h-5zM168 158h5v1h-5zM168 206h5v1h-5zM168 207h5v1h-5zM168 208h5v1h-5zM168 209h5v1h-5zM168 210h5v1h-5zM168 211h5v1h-5zM169 225h3v1h-3zM169 226h3v1h-3zM169 227h3v1h-3zM168 241h5v1h-5zM353 241h5v1h-5zM168 242h5v1h-5zM353 242h5v1h-5zM168 243h5v1h-5zM353 243h5v1h-5zM168 244h5v1h-5zM353 244h5v1h-5zM168 245h5v1h-5zM353 245h5v1h-5zM168 246h5v1h-5zM353 246h5v1h-5zM168 294h5v1h-5zM353 294h5v1h-5zM168 295h5v1h-5zM353 295h5v1h-5zM168 296h5v1h-5zM353 296h5v1h-5zM168 297h5v1h-5zM353 297h5v1h-5zM168 298h5v1h-5zM353 298h5v1h-5zM168 299h5v1h-5zM353 299h5v1h-5zM169 313h3v1h-3zM169 314h3v1h-3zM169 315h3v1h-3zM168 329h5v1h-5zM168 330h5v1h-5zM168 331h5v1h-5zM168 332h5v1h-5zM168 333h5v1h-5zM168 334h5v1h-5zM168 382h5v1h-5zM168 383h5v1h-5zM168 384h5v1h-5zM168 385h5v1h-5zM168 386h5v1h-5zM168 387h5v1h-5zM354 436h3v1h-3zM354 437h3v1h-3zM354 438h3v1h-3z" fill="#d42200"/>
<path d="M170 120h186v1h-186zM170 121h1v1h-1zM355 121h1v1h-1zM170 122h1v1h-1zM355 122h1v1h-1zM170 123h1v1h-1zM355 123h1v1h-1zM170 124h1v1h-1zM355 124h1v1h-1zM170 125h1v1h-1zM355 125h1v1h-1zM170 126h1v1h-1zM355 126h1v1h-1zM170 127h1v1h-1zM355 127h1v1h-1zM170 128h1v1h-1zM355 128h1v1h-1zM170 129h1v1h-1zM355 129h1v1h-1zM170 130h1v1h-1zM355 130h1v1h-1zM170 131h1v1h-1zM355 131h1v1h-1zM170 132h1v1h-1zM355 132h1v1h-1zM170 133h1v1h-1zM355 133h1v1h-1zM170 134h1v1h-1zM355 134h1v1h-1zM170 135h1v1h-1zM355 135h1v1h-1zM170 136h1v1h-1zM355 136h1v1h-1zM170 137h1v1h-1zM355 137h1v1h-1zM170 138h1v1h-1zM355 138h1v1h-1zM170 139h1v1h-1zM355 139h1v1h-1zM170 140h1v1h-1zM355 140h1v1h-1zM170 141h1v1h-1zM355 141h1v1h-1zM170 142h1v1h-1zM355 142h1v1h-1zM170 143h1v1h-1zM355 143h1v1h-1zM170 144h1v1h-1zM355 144h1v1h-1zM170 145h1v1h-1zM355 145h1v1h-1zM170 146h1v1h-1zM355 146h1v1h-1zM170 147h1v1h-1zM355 147h1v1h-1zM170 148h1v1h-1zM355 148h1v1h-1zM170 149h1v1h-1zM355 149h1v1h-1zM170 150h1v1h-1zM355 150h1v1h-1zM170 151h1v1h-1zM355 151h1v1h-1zM170 152h1v1h-1zM355 152h1v1h-1zM170 153h1v1h-1zM355 153h1v1h-1zM170 154h1v1h-1zM355 154h1v1h-1zM170 155h1v1h-1zM355 155h1v1h-1zM355 156h1v1h-1zM355 157h1v1h-1zM355 158h1v1h-1zM355 159h1v1h-1zM355 160h1v1h-1zM355 161h1v1h-1zM355 162h1v1h-1zM355 163h1v1h-1zM355 164h1v1h-1zM355 165h1v1h-1zM355 166h1v1h-1zM355 167h1v1h-1zM355 168h1v1h-1zM355 169h1v1h-1zM355 170h1v1h-1zM355 171h1v1h-1zM355 172h1v1h-1zM355 173h1v1h-1zM355 174h1v1h-1zM355 175h1v1h-1zM355 176h1v1h-1zM355 177h1v1h-1zM355 178h1v1h-1zM355 179h1v1h-1zM355 180h1v1h-1zM355 181h1v1h-1zM355 182h1v1h-1zM355 183h1v1h-1zM355 184h1v1h-1zM355 185h1v1h-1zM355 186h1v1h-1zM355 187h1v1h-1zM355 188h1v1h-1zM355 189h1v1h-1zM355 190h1v1h-1zM355 191h1v1h-1zM355 192h1v1h-1zM355 193h1v1h-1zM355 194h1v1h-1zM355 195h1v1h-1zM355 196h1v1h-1zM355 197h1v1h-1zM355 198h1v1h-1zM355 199h1v1h-1zM355 200h1v1h-1zM355 201h1v1h-1zM355 202h1v1h-1zM355 203h1v1h-1zM355 204h1v1h-1zM355 205h1v1h-1zM355 206h1v1h-1zM355 207h1v1h-1zM170 208h1v1h-1zM355 208h1v1h-1zM170 209h1v1h-1zM355 209h1v1h-1zM170 210h1v1h-1zM355 210h1v1h-1zM170 211h1v1h-1zM355 211h1v1h-1zM170 212h1v1h-1zM355 212h1v1h-1zM170 213h1v1h-1zM355 213h1v1h-1zM170 214h1v1h-1zM355 214h1v1h-1zM170 215h1v1h-1zM355 215h1v1h-1zM170 216h1v1h-1zM355 216h1v1h-1zM170 217h1v1h-1zM355 217h1v1h-1zM170 218h1v1h-1zM355 218h1v1h-1zM170 219h1v1h-1zM355 219h1v1h-1zM170 220h1v1h-1zM355 220h1v1h-1zM170 221h1v1h-1zM355 221h1v1h-1zM170 222h1v1h-1zM355 222h1v1h-1zM170 223h1v1h-1zM355 223h1v1h-1zM170 224h1v1h-1zM355 224h1v1h-1zM170 225h1v1h-1zM355 225h1v1h-1zM170 226h1v1h-1zM355 226h1v1h-1zM170 227h1v1h-1zM355 227h1v1h-1zM170 228h1v1h-1zM355 228h1v1h-1zM170 229h1v1h-1zM355 229h1v1h-1zM170 230h1v1h-1zM355 230h1v1h-1zM170 231h1v1h-1zM355 231h1v1h-1zM170 232h1v1h-1zM355 232h1v1h-1zM170 233h1v1h-1zM355 233h1v1h-1zM170 234h1v1h-1zM355 234h1v1h-1zM170 235h1v1h-1zM355 235h1v1h-1zM170 236h1v1h-1zM355 236h1v1h-1zM170 237h1v1h-1zM355 237h1v1h-1zM170 238h1v1h-1zM355 238h1v1h-1zM170 239h1v1h-1zM355 239h1v1h-1zM170 240h1v1h-1zM355 240h1v1h-1zM170 241h1v1h-1zM355 241h1v1h-1zM170 242h1v1h-1zM355 242h1v1h-1zM170 243h1v1h-1zM355 243h1v1h-1zM170 244h1v1h-1zM355 244h1v1h-1zM170 296h1v1h-1zM355 296h1v1h-1zM170 297h1v1h-1zM355 297h1v1h-1zM170 298h1v1h-1zM355 298h1v1h-1zM170 299h1v1h-1zM355 299h1v1h-1zM170 300h1v1h-1zM355 300h1v1h-1zM170 301h1v1h-1zM355 301h1v1h-1zM170 302h1v1h-1zM355 302h1v1h-1zM170 303h1v1h-1zM355 303h1v1h-1zM170 304h1v1h-1zM355 304h1v1h-1zM170 305h1v1h-1zM355 305h1v1h-1zM170 306h1v1h-1zM355 306h1v1h-1zM170 307h1v1h-1zM355 307h1v1h-1zM170 308h1v1h-1zM355 308h1v1h-1zM170 309h1v1h-1zM355 309h1v1h-1zM170 310h1v1h-1zM355 310h1v1h-1zM170 311h1v1h-1zM355 311h1v1h-1zM170 312h1v1h-1zM355 312h1v1h-1zM170 313h1v1h-1zM355 313h1v1h-1zM170 314h1v1h-1zM355 314h1v1h-1zM170 315h1v1h-1zM355 315h1v1h-1zM170 316h1v1h-1zM355 316h1v1h-1zM170 317h1v1h-1zM355 317h1v1h-1zM170 318h1v1h-1zM355 318h1v1h-1zM170 319h1v1h-1zM355 319h1v1h-1zM170 320h1v1h-1zM355 320h1v1h-1zM170 321h1v1h-1zM355 321h1v1h-1zM170 322h1v1h-1zM355 322h1v1h-1zM170 323h1v1h-1zM355 323h1v1h-1zM170 324h1v1h-1zM355 324h1v1h-1zM170 325h1v1h-1zM355 325h1v1h-1zM170 326h1v1h-1zM355 326h1v1h-1zM170 327h1v1h-1zM355 327h1v1h-1zM170 328h1v1h-1zM355 328h1v1h-1zM170 329h1v1h-1zM355 329h1v1h-1zM170 330h1v1h-1zM355 330h1v1h-1zM170 331h1v1h-1zM355 331h1v1h-1zM170 332h1v1h-1zM355 332h1v1h-1zM355 333h1v1h-1zM355 334h1v1h-1zM355 335h1v1h-1zM355 336h1v1h-1zM355 337h1v1h-1zM355 338h1v1h-1zM355 339h1v1h-1zM355 340h1v1h-1zM355 341h1v1h-1zM355 342h1v1h-1zM355 343h1v1h-1zM355 344h1v1h-1zM355 345h1v1h-1zM355 346h1v1h-1zM355 347h1v1h-1zM355 348h1v1h-1zM355 349h1v1h-1zM355 350h1v1h-1zM355 351h1v1h-1zM355 352h1v1h-1zM355 353h1v1h-1zM355 354h1v1h-1zM355 355h1v1h-1zM355 356h1v1h-1zM355 357h1v1h-1zM355 358h1v1h-1zM355 359h1v1h-1zM355 360h1v1h-1zM355 361h1v1h-1zM355 362h1v1h-1zM355 363h1v1h-1zM355 364h1v1h-1zM355 365h1v1h-1zM355 366h1v1h-1zM355 367h1v1h-1zM355 368h1v1h-1zM355 369h1v1h-1zM355 370h1v1h-1zM355 371h1v1h-1zM355 372h1v1h-1zM355 373h1v1h-1zM355 374h1v1h-1zM355 375h1v1h-1zM355 376h1v1h-1zM355 377h1v1h-1zM355 378h1v1h-1zM355 379h1v1h-1zM355 380h1v1h-1zM355 381h1v1h-1zM355 382h1v1h-1zM355 383h1v1h-1zM170 384h1v1h-1zM355 384h1v1h-1zM170 385h1v1h-1zM355 385h1v1h-1zM170 386h1v1h-1zM355 386h1v1h-1zM170 387h1v1h-1zM355 387h1v1h-1zM170 388h1v1h-1zM355 388h1v1h-1zM170 389h1v1h-1zM355 389h1v1h-1zM170 390h1v1h-1zM355 390h1v1h-1zM170 391h1v1h-1zM355 391h1v1h-1zM170 392h1v1h-1zM355 392h1v1h-1zM170 393h1v1h-1zM355 393h1v1h-1zM170 394h1v1h-1zM355 394h1v1h-1zM170 395h1v1h-1zM355 395h1v1h-1zM170 396h1v1h-1zM355 396h1v1h-1zM170 397h1v1h-1zM355 397h1v1h-1zM170 398h1v1h-1zM355 398h1v1h-1zM170 399h1v1h-1zM355 399h1v1h-1zM170 400h1v1h-1zM355 400h1v1h-1zM170 401h1v1h-1zM355 401h1v1h-1zM170 402h1v1h-1zM355 402h1v1h-1zM170 403h1v1h-1zM355 403h1v1h-1zM170 404h1v1h-1zM355 404h1v1h-1zM170 405h1v1h-1zM355 405h1v1h-1zM170 406h1v1h-1zM355 406h1v1h-1zM170 407h1v1h-1zM355 407h1v1h-1zM170 408h1v1h-1zM355 408h1v1h-1zM170 409h1v1h-1zM355 409h1v1h-1zM170 410h1v1h-1zM355 410h1v1h-1zM170 411h1v1h-1zM355 411h1v1h-1zM170 412h1v1h-1zM355 412h1v1h-1zM170 413h1v1h-1zM355 413h1v1h-1zM170 414h1v1h-1zM355 414h1v1h-1zM170 415h1v1h-1zM355 415h1v1h-1zM170 416h1v1h-1zM355 416h1v1h-1zM170 417h1v1h-1zM355 417h1v1h-1zM170 418h1v1h-1zM355 418h1v1h-1zM170 419h1v1h-1zM355 419h1v1h-1zM170 420h1v1h-1zM355 420h1v1h-1zM170 421h1v1h-1zM355 421h1v1h-1zM170 422h1v1h-1zM355 422h1v1h-1zM170 423h1v1h-1zM355 423h1v1h-1zM170 424h1v1h-1zM355 424h1v1h-1zM170 425h1v1h-1zM355 425h1v1h-1zM170 426h1v1h-1zM355 426h1v1h-1zM170 427h1v1h-1zM355 427h1v1h-1zM170 428h1v1h-1zM355 428h1v1h-1zM170 429h1v1h-1zM355 429h1v1h-1zM170 430h1v1h-1zM355 430h1v1h-1zM170 431h1v1h-1zM355 431h1v1h-1zM170 432h1v1h-1zM355 432h1v1h-1zM170 433h1v1h-1zM355 433h1v1h-1zM170 434h1v1h-1zM355 434h1v1h-1zM170 435h1v1h-1zM355 435h1v1h-1zM170 436h1v1h-1zM355 436h1v1h-1zM170 437h186v1h-186z" fill="#00ccee"/>
<g filter="url(#gf)"><text x="164.5" y="164.2" font-size="5.5" fill="#cccccc">1</text></g>
<g filter="url(#gf)"><text x="164.5" y="205" font-size="5.5" fill="#cccccc">2</text></g>
<g filter="url(#gf)"><text x="348" y="252" font-size="5.5" fill="#cccccc">1</text></g>
<g filter="url(#gf)"><text x="348" y="292" font-size="5.5" fill="#cccccc">2</text></g>
<g>
<text x="28.80" y="13.75" font-size="11.0" fill="#faf6f0" textLength="92.32" lengthAdjust="spacingAndGlyphs">xschem - rlc.sch*</text>
<text x="10.87" y="36.7" font-size="11.5" fill="#000" textLength="17.30" lengthAdjust="spacingAndGlyphs">File</text>
<text x="38.57" y="36.7" font-size="11.5" fill="#000" textLength="18.47" lengthAdjust="spacingAndGlyphs">Edit</text>
<text x="68.10" y="36.7" font-size="11.5" fill="#000" textLength="37.26" lengthAdjust="spacingAndGlyphs">Options</text>
<text x="116.00" y="36.7" font-size="11.5" fill="#000" textLength="23.53" lengthAdjust="spacingAndGlyphs">View</text>
<text x="149.76" y="36.7" font-size="11.5" fill="#000" textLength="49.50" lengthAdjust="spacingAndGlyphs">Properties</text>
<text x="209.44" y="36.7" font-size="11.5" fill="#000" textLength="33.11" lengthAdjust="spacingAndGlyphs">Layers</text>
<text x="253.20" y="36.7" font-size="11.5" fill="#000" textLength="25.37" lengthAdjust="spacingAndGlyphs">Tools</text>
<text x="289.20" y="36.7" font-size="11.5" fill="#000" textLength="36.44" lengthAdjust="spacingAndGlyphs">Symbol</text>
<text x="335.39" y="36.7" font-size="11.5" fill="#000" textLength="45.06" lengthAdjust="spacingAndGlyphs">Highlight</text>
<text x="391.50" y="36.7" font-size="11.5" fill="#000" textLength="53.40" lengthAdjust="spacingAndGlyphs">Simulation</text>
<text x="773.11" y="36.7" font-size="11.5" fill="#000" textLength="23.45" lengthAdjust="spacingAndGlyphs">Help</text>
<text x="600.30" y="36.7" font-size="11.5" fill="#000" textLength="32.95" lengthAdjust="spacingAndGlyphs">Waves</text>
<text x="657.20" y="36.7" font-size="11.5" fill="#000" textLength="43.36" lengthAdjust="spacingAndGlyphs">Simulate</text>
<text x="724.59" y="36.7" font-size="11.5" fill="#000" textLength="32.16" lengthAdjust="spacingAndGlyphs">Netlist</text>
<text x="6.20" y="613.0" font-size="11.5" fill="#000" textLength="29.14" lengthAdjust="spacingAndGlyphs">SNAP:</text>
<text x="39.87" y="613.0" font-size="11.5" fill="#000" textLength="11.94" lengthAdjust="spacingAndGlyphs">10</text>
<text x="105.40" y="613.0" font-size="11.5" fill="#000" textLength="28.76" lengthAdjust="spacingAndGlyphs">GRID:</text>
<text x="139.50" y="613.0" font-size="11.5" fill="#000" textLength="11.32" lengthAdjust="spacingAndGlyphs">20</text>
<text x="203.52" y="613.0" font-size="11.5" fill="#000" textLength="77.54" lengthAdjust="spacingAndGlyphs">NETLIST MODE:</text>
<text x="286.50" y="613.0" font-size="11.5" fill="#000" textLength="25.27" lengthAdjust="spacingAndGlyphs">spice</text>
<text x="351.60" y="613.0" font-size="11.5" fill="#000" textLength="313.27" lengthAdjust="spacingAndGlyphs">mouse = 190 -170 - /mnt/x/home/schippes/x/rlc.sch  selected: 0</text>
</g>
<g filter="url(#gf)">
<text x="188.70" y="366.1" font-size="9.3" fill="#cccccc" textLength="118.24" lengthAdjust="spacingAndGlyphs">'3*cos(time*time*time*1e11)'</text>
<text x="362.00" y="127.90" font-size="17.25" fill="#00ccee" textLength="10.35" lengthAdjust="spacingAndGlyphs">A</text>
<text x="176.55" y="232.90" font-size="17.25" fill="#00ccee" textLength="11.24" lengthAdjust="spacingAndGlyphs">B</text>
<text x="177.01" y="320.73" font-size="16.62" fill="#00ccee" textLength="11.35" lengthAdjust="spacingAndGlyphs">C</text>
<text x="361.85" y="444.83" font-size="16.90" fill="#00ccee" textLength="9.04" lengthAdjust="spacingAndGlyphs">0</text>
<text x="182.60" y="173.01" font-size="9.01" fill="#cccccc" textLength="12.68" lengthAdjust="spacingAndGlyphs">C0</text>
<text x="182.56" y="186.89" font-size="10.99" fill="#cccccc" textLength="24.87" lengthAdjust="spacingAndGlyphs">50nF</text>
<text x="182.43" y="200.10" font-size="11.74" fill="#cccccc" textLength="21.95" lengthAdjust="spacingAndGlyphs">m=1</text>
<text x="367.59" y="260.92" font-size="8.45" fill="#cccccc" textLength="13.00" lengthAdjust="spacingAndGlyphs">R0</text>
<text x="367.33" y="275.00" font-size="9.32" fill="#cccccc" textLength="10.14" lengthAdjust="spacingAndGlyphs">1k</text>
<text x="367.42" y="288.00" font-size="8.70" fill="#cccccc" textLength="18.99" lengthAdjust="spacingAndGlyphs">m=1</text>
<text x="178.26" y="262.80" font-size="9.18" fill="#cccccc" textLength="8.25" lengthAdjust="spacingAndGlyphs">l1</text>
<text x="178.73" y="278.79" font-size="11.27" fill="#cccccc" textLength="29.22" lengthAdjust="spacingAndGlyphs">10mH</text>
<text x="187.58" y="351.00" font-size="8.26" fill="#cccccc" textLength="11.01" lengthAdjust="spacingAndGlyphs">E1</text>
</g>
</svg></body></html>
